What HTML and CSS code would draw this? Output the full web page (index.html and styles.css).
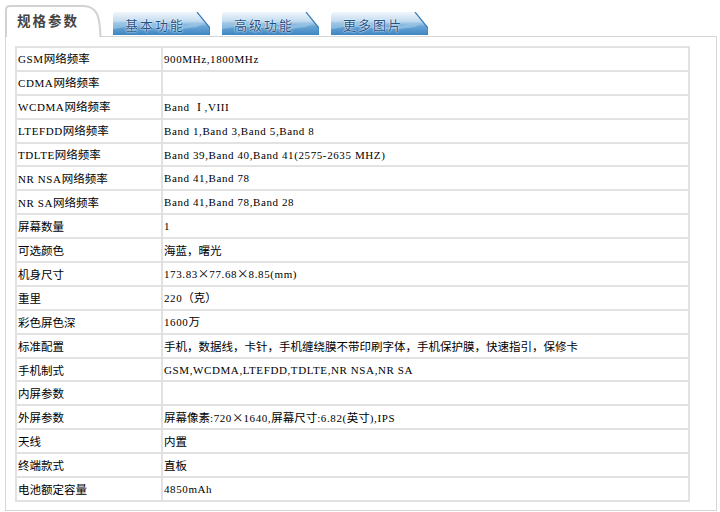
FILE: index.html
```html
<!DOCTYPE html>
<html lang="zh">
<head>
<meta charset="utf-8">
<title>规格参数</title>
<link rel="stylesheet" href="styles.css">
</head>
<body>
<div class="page">
  <div class="tabs">
    <div class="tab tab-active">
      <svg class="tab-bg" width="97" height="32" viewBox="0 0 97 32">
        <path d="M1 32 L1 5 Q1 1 5 1 L78 1 Q88 1 92 9 Q95 15 95.5 32" fill="#fff" stroke="#d2d2d2" stroke-width="2"/>
      </svg>
      <span class="tab-label">规格参数</span>
    </div>
    <div class="tab tab-blue">
      <svg class="tab-bg" width="97" height="23" viewBox="0 0 97 23">
        <defs>
          <linearGradient id="g1" x1="0" y1="0" x2="0" y2="1">
            <stop offset="0" stop-color="#f2f7fb"/>
            <stop offset="0.4" stop-color="#c2dbef"/>
            <stop offset="0.62" stop-color="#6aa6d6"/>
            <stop offset="1" stop-color="#3d86c2"/>
          </linearGradient>
        </defs>
        <path d="M0 23 L0 3 Q0 0 3 0 L84 0 L97 16 L97 23 Z" fill="url(#g1)"/>
        <path d="M0 12 Q20 6 40 12 T80 11 L90 12 L84 15 Q60 19 40 16 T0 17 Z" fill="#9cc6e6" opacity="0.7"/>
        <path d="M84 0 L97 16 L97 23" fill="none" stroke="#3a7db6" stroke-width="1.2"/>
      </svg>
      <span class="tab-label">基本功能</span>
    </div>
    <div class="tab tab-blue">
      <svg class="tab-bg" width="97" height="23" viewBox="0 0 97 23">
        <path d="M0 23 L0 3 Q0 0 3 0 L84 0 L97 16 L97 23 Z" fill="url(#g1)"/>
        <path d="M0 12 Q20 6 40 12 T80 11 L90 12 L84 15 Q60 19 40 16 T0 17 Z" fill="#9cc6e6" opacity="0.7"/>
        <path d="M84 0 L97 16 L97 23" fill="none" stroke="#3a7db6" stroke-width="1.2"/>
      </svg>
      <span class="tab-label">高级功能</span>
    </div>
    <div class="tab tab-blue">
      <svg class="tab-bg" width="97" height="23" viewBox="0 0 97 23">
        <path d="M0 23 L0 3 Q0 0 3 0 L84 0 L97 16 L97 23 Z" fill="url(#g1)"/>
        <path d="M0 12 Q20 6 40 12 T80 11 L90 12 L84 15 Q60 19 40 16 T0 17 Z" fill="#9cc6e6" opacity="0.7"/>
        <path d="M84 0 L97 16 L97 23" fill="none" stroke="#3a7db6" stroke-width="1.2"/>
      </svg>
      <span class="tab-label">更多图片</span>
    </div>
  </div>
  <div class="panel">
    <table class="spec">
      <tr><td class="k"><span class="en">GSM</span>网络频率</td><td class="v en">900MHz,1800MHz</td></tr>
      <tr><td class="k"><span class="en">CDMA</span>网络频率</td><td class="v"></td></tr>
      <tr><td class="k"><span class="en">WCDMA</span>网络频率</td><td class="v en">Band <span class="roman">I</span>,VIII</td></tr>
      <tr><td class="k"><span class="en">LTEFDD</span>网络频率</td><td class="v en">Band 1,Band 3,Band 5,Band 8</td></tr>
      <tr><td class="k"><span class="en">TDLTE</span>网络频率</td><td class="v en">Band 39,Band 40,Band 41(2575-2635 MHZ)</td></tr>
      <tr><td class="k"><span class="en">NR NSA</span>网络频率</td><td class="v en">Band 41,Band 78</td></tr>
      <tr><td class="k"><span class="en">NR SA</span>网络频率</td><td class="v en">Band 41,Band 78,Band 28</td></tr>
      <tr><td class="k">屏幕数量</td><td class="v en">1</td></tr>
      <tr><td class="k">可选颜色</td><td class="v">海蓝，曙光</td></tr>
      <tr><td class="k">机身尺寸</td><td class="v"><span class="en">173.83</span>×<span class="en">77.68</span>×<span class="en">8.85(mm)</span></td></tr>
      <tr><td class="k">重里</td><td class="v"><span class="en">220</span>（克）</td></tr>
      <tr><td class="k">彩色屏色深</td><td class="v"><span class="en">1600</span>万</td></tr>
      <tr><td class="k">标准配置</td><td class="v">手机，数据线，卡针，手机缠绕膜不带印刷字体，手机保护膜，快速指引，保修卡</td></tr>
      <tr><td class="k">手机制式</td><td class="v en">GSM,WCDMA,LTEFDD,TDLTE,NR NSA,NR SA</td></tr>
      <tr><td class="k">内屏参数</td><td class="v"></td></tr>
      <tr><td class="k">外屏参数</td><td class="v">屏幕像素<span class="en">:720</span>×<span class="en">1640,</span>屏幕尺寸<span class="en">:6.82(</span>英寸<span class="en">),IPS</span></td></tr>
      <tr><td class="k">天线</td><td class="v">内置</td></tr>
      <tr><td class="k">终端款式</td><td class="v">直板</td></tr>
      <tr><td class="k">电池额定容量</td><td class="v en">4850mAh</td></tr>
    </table>
  </div>
</div>
</body>
</html>
```
FILE: styles.css
```css
html, body {
  margin: 0;
  padding: 0;
  background: #fff;
}
body {
  font-family: "Noto Sans CJK SC", "Liberation Sans", sans-serif;
  color: #000;
}
.page {
  width: 720px;
  height: 512px;
  padding: 5px 3px 0 5px;
  box-sizing: border-box;
}
.tabs {
  display: flex;
  align-items: flex-end;
  gap: 12px;
  height: 31px;
  position: relative;
  z-index: 1;
}
.tab {
  position: relative;
  display: flex;
  align-items: center;
}
.tab-bg {
  position: absolute;
  left: 0;
  top: 0;
  display: block;
}
.tab-label {
  position: relative;
}
.tab-active {
  width: 96px;
  height: 32px;
  margin-bottom: -1px;
  padding-left: 12px;
  box-sizing: border-box;
}
.tab-active .tab-label {
  font-size: 13.5px;
  font-weight: bold;
  letter-spacing: 2px;
  color: #444;
  margin-top: -3px;
}
.tab-blue {
  width: 97px;
  height: 23px;
  margin-bottom: 1px;
  padding-left: 12px;
  box-sizing: border-box;
}
.tab-blue .tab-label {
  font-size: 13px;
  letter-spacing: 2px;
  color: #1f5488;
  text-shadow: 0 0 2px #fff, 0 0 1px #fff;
  margin-top: 1px;
}
.panel {
  border: 1px solid #d6d6d6;
  width: 712px;
  height: 475px;
  box-sizing: border-box;
  padding: 9px 26px 9px 9px;
}
.spec {
  border-collapse: collapse;
  width: 675px;
  border: 2px solid #dcdcdc;
  table-layout: fixed;
}
.spec td {
  border: 2px solid #e2e2e2;
  height: 21.9px;
  padding: 0 0 0 1px;
  font-size: 11.5px;
  line-height: 14px;
  white-space: nowrap;
  vertical-align: middle;
}
.spec td.k {
  width: 143px;
}
.spec .en {
  font-family: "Liberation Serif", serif;
  font-size: 11px;
  letter-spacing: 0.6px;
}
.spec .roman {
  display: inline-block;
  padding: 0 3px 0 4px;
  font-size: 12px;
}
```
